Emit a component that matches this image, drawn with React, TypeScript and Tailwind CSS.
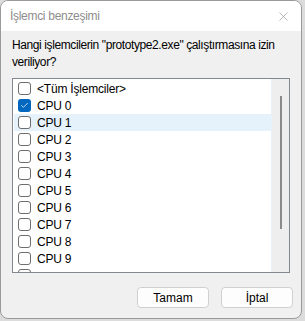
import { Check, X } from 'lucide-react';

const ROWS = ['<Tüm İşlemciler>', 'CPU 0', 'CPU 1', 'CPU 2', 'CPU 3', 'CPU 4', 'CPU 5', 'CPU 6', 'CPU 7', 'CPU 8', 'CPU 9'];

function Box({ checked }: { checked?: boolean }) {
  if (checked) {
    return (
      <span className="flex h-[13px] w-[13px] shrink-0 items-center justify-center rounded-[3px] bg-[#0067c0]">
        <Check size={9} strokeWidth={2} className="text-white" />
      </span>
    );
  }
  return <span className="h-[13px] w-[13px] shrink-0 rounded-[3px] border border-[#6e6e6e] bg-white" />;
}

function Row({ label, checked, selected }: { label: string; checked?: boolean; selected?: boolean }) {
  return (
    <div className={`flex h-[17px] shrink-0 items-center gap-[6px] pl-[4px] ${selected ? 'bg-[#e5f1fb]' : ''}`}>
      <Box checked={checked} />
      <span className="text-[12px] tracking-[-0.2px] text-black">{label}</span>
    </div>
  );
}

export default function App() {
  return (
    <div className="flex h-[321px] w-[305px] bg-[#dcdcdc] font-['Liberation_Sans',sans-serif]">
      <div className="flex h-[319px] w-[302px] flex-col overflow-hidden rounded-lg border border-[#9a9a9a] bg-[#f0f0f0]">
        {/* title bar */}
        <div className="flex h-[30px] shrink-0 items-center justify-between bg-white pl-[9px] pr-[10px]">
          <span className="text-[12px] tracking-[-0.3px] text-[#8d8d8d]">İşlemci benzeşimi</span>
          <X size={15} strokeWidth={1} className="text-[#8d8d8d]" />
        </div>

        <p className="mt-[6px] whitespace-nowrap px-[11px] text-[12px] leading-[17px] tracking-[-0.4px] text-black">
          Hangi işlemcilerin "prototype2.exe" çalıştırmasına izin
          <br />
          veriliyor?
        </p>

        {/* list */}
        <div className="mx-[11px] mt-[7px] flex h-[195px] border border-[#828790] bg-white">
          <div className="flex flex-1 flex-col overflow-hidden pt-[1px] pl-[1px]">
            {ROWS.map((r, i) => (
              <Row key={r} label={r} checked={i === 1} selected={i === 2} />
            ))}
            <div className="flex h-[17px] shrink-0 items-center pl-[4px]">
              <Box />
            </div>
          </div>
          <div className="flex w-[18px] justify-center border-l border-[#e8f0fb] bg-[#eeeeee] pt-[17px]">
            <div className="h-[133px] w-[2px] bg-[#8a8a8a]" />
          </div>
        </div>

        {/* buttons */}
        <div className="mt-[14px] flex justify-end gap-[12px] pr-[8px]">
          <button className="h-[21px] w-[72px] rounded-[4px] border border-[#d0d0d0] bg-[#fdfdfd] text-[12px] text-black">Tamam</button>
          <button className="h-[21px] w-[72px] rounded-[4px] border border-[#d0d0d0] bg-[#fdfdfd] text-[12px] text-black">İptal</button>
        </div>
      </div>
    </div>
  );
}
